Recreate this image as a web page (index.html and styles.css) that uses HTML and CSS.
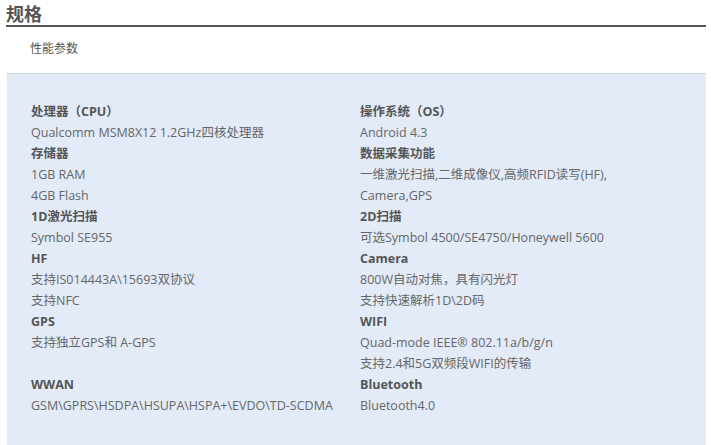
FILE: index.html
```html
<!DOCTYPE html>
<html lang="zh">
<head>
<meta charset="utf-8">
<link rel="stylesheet" href="styles.css">
</head>
<body>
<div class="page">
  <h2 class="title">规格</h2>
  <div class="subtitle">性能参数</div>
  <div class="specs">
    <div class="col">
      <div class="label">处理器（CPU）</div>
      <div class="val">Qualcomm MSM8X12 1.2GHz四核处理器</div>
      <div class="label">存储器</div>
      <div class="val">1GB RAM</div>
      <div class="val">4GB Flash</div>
      <div class="label">1D激光扫描</div>
      <div class="val">Symbol SE955</div>
      <div class="label">HF</div>
      <div class="val">支持IS014443A\15693双协议</div>
      <div class="val">支持NFC</div>
      <div class="label">GPS</div>
      <div class="val">支持独立GPS和 A-GPS</div>
      <div class="val">&nbsp;</div>
      <div class="label">WWAN</div>
      <div class="val">GSM\GPRS\HSDPA\HSUPA\HSPA+\EVDO\TD-SCDMA</div>
    </div>
    <div class="col">
      <div class="label">操作系统（OS）</div>
      <div class="val">Android 4.3</div>
      <div class="label">数据采集功能</div>
      <div class="val">一维激光扫描,二维成像仪,高频RFID读写(HF),</div>
      <div class="val">Camera,GPS</div>
      <div class="label">2D扫描</div>
      <div class="val">可选Symbol 4500/SE4750/Honeywell 5600</div>
      <div class="label">Camera</div>
      <div class="val">800W自动对焦，具有闪光灯</div>
      <div class="val">支持快速解析1D\2D码</div>
      <div class="label">WIFI</div>
      <div class="val">Quad-mode IEEE® 802.11a/b/g/n</div>
      <div class="val">支持2.4和5G双频段WIFI的传输</div>
      <div class="label">Bluetooth</div>
      <div class="val">Bluetooth4.0</div>
    </div>
  </div>
</div>
</body>
</html>
```
FILE: styles.css
```css
html, body {
  margin: 0;
  padding: 0;
  background: #fff;
}
body {
  font-family: "Open Sans", "Noto Sans CJK SC", sans-serif;
  color: #666;
}
.page {
  padding: 0 5px 0 6px;
}
.title {
  margin: 0;
  font-family: "Noto Sans CJK SC", sans-serif;
  font-size: 18px;
  font-weight: bold;
  color: #555;
  line-height: 24px;
  padding-top: 1px;
  border-bottom: 2px solid #555;
}
.subtitle {
  font-family: "Noto Sans CJK SC", sans-serif;
  font-size: 12px;
  color: #555;
  padding: 12px 0 0 24px;
  line-height: 18px;
  height: 46px;
  box-sizing: border-box;
}
.specs {
  margin-left: 1px;
  background: #e2ebf7;
  border-top: 1px dotted #b8c6dc;
  padding: 27px 0 30px 24px;
  display: grid;
  grid-template-columns: 329px 1fr;
}
.label {
  font-size: 12.5px;
  font-weight: bold;
  color: #555;
  line-height: 21px;
}
.val {
  font-size: 12.5px;
  color: #666;
  line-height: 21px;
}
```
